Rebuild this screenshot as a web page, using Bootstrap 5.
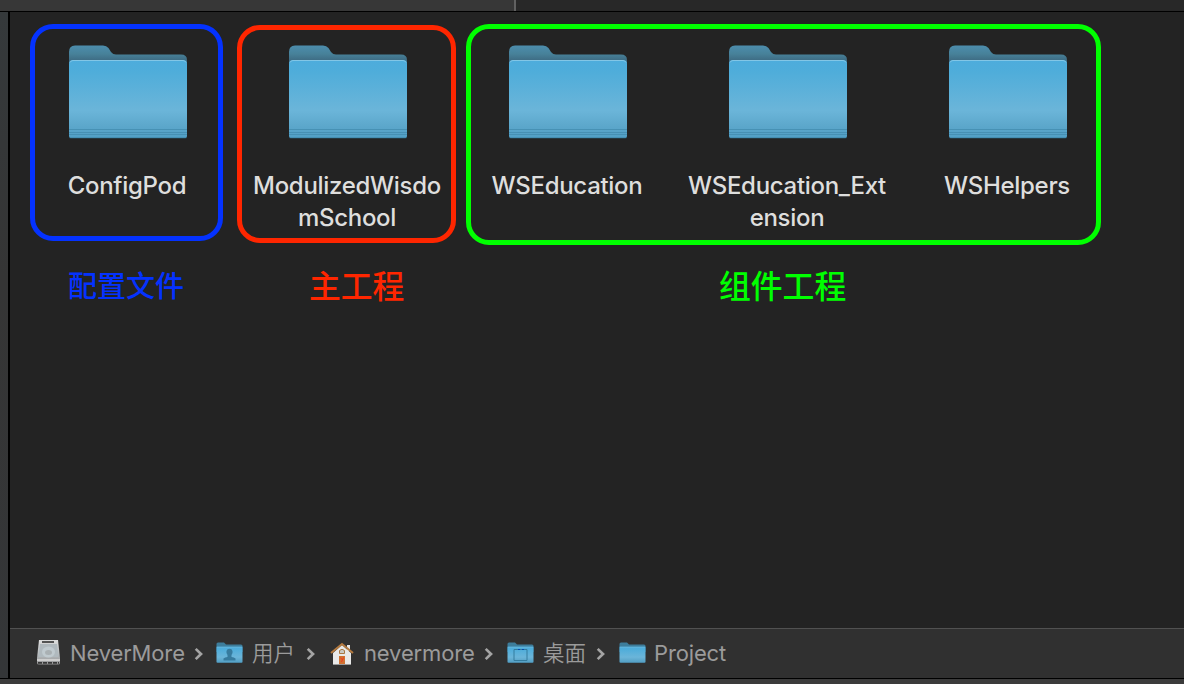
<!DOCTYPE html>
<html lang="zh-CN">
<head>
<meta charset="utf-8">
<meta name="viewport" content="width=device-width, initial-scale=1">
<title>Project</title>
<link href="https://cdn.jsdelivr.net/npm/bootstrap@5.3.0/dist/css/bootstrap.min.css" rel="stylesheet">
<style>
  body { background:#232323; color:#dededd; font-family:Inter,"Noto Sans CJK SC",sans-serif; }
  .tabs { height:12px; background:#282828; border-bottom:1px solid #000; }
  .tab-left { width:516px; background:#373737; border-right:2px solid #616161; }
  .side { width:10px; background:linear-gradient(#35393b,#353535 40%,#343638); border-right:2px solid #000; }
  .files { padding-left:8px; height:616px; }
  .file { width:220px; padding-top:32px; }
  .file svg { width:120px; height:98px; }
  .name { font-size:24px; font-weight:500; letter-spacing:-.3px; line-height:32px; margin-top:28px; margin-right:2px; white-space:nowrap; }
  .frame { position:absolute; border:5px solid; border-radius:23px; }
  .f1 { left:20px; top:12px; width:193px; height:217px; border-color:#0432ff; }
  .f2 { left:227px; top:13px; width:219px; height:218px; border-color:#ff2600; }
  .f3 { left:456px; top:12px; width:635px; height:221px; border-color:#00ff00; }
  .notes { font-family:"Noto Sans CJK SC",sans-serif; font-weight:500; line-height:44px; margin-top:28px; }
  .n1 { color:#0432ff; font-size:29px; width:220px; padding-left:50px; }
  .n2 { color:#ff2600; font-size:31.8px; width:220px; padding-left:71px; }
  .n3 { color:#00ff00; font-size:31.8px; padding-left:261px; }
  .pathbar { height:50px; background:#303030; border-top:1px solid #515151; color:#9b9b9b; font-size:22px; line-height:49px; letter-spacing:-.15px; }
  .pathbar span { white-space:nowrap; }
  .bottom { height:6px; background:#3b3b3b; border-top:1px solid #000; }
  .pathbar .cjk { font-family:"Noto Sans CJK SC",sans-serif; font-weight:350; font-size:21.5px; letter-spacing:0; padding-bottom:3px; line-height:46px; }
</style>
</head>
<body class="overflow-hidden">
<svg width="0" height="0" class="position-absolute" aria-hidden="true">
  <defs>
    <linearGradient id="front" x1="0" y1="0" x2="0" y2="1">
      <stop offset="0" stop-color="#4dacdc"/><stop offset=".15" stop-color="#4fadda"/><stop offset=".65" stop-color="#6bb5d9"/><stop offset=".85" stop-color="#5ca7cb"/><stop offset="1" stop-color="#519fc6"/>
    </linearGradient>
    <linearGradient id="back" x1="0" y1="0" x2="0" y2="1">
      <stop offset="0" stop-color="#4c8dad"/><stop offset=".3" stop-color="#478199"/><stop offset=".5" stop-color="#3f6e86"/><stop offset="1" stop-color="#3d6f89"/>
    </linearGradient>
    <linearGradient id="metal" x1="0" y1="0" x2="0" y2="1">
      <stop offset="0" stop-color="#dcdcdc"/><stop offset=".6" stop-color="#b6babd"/><stop offset="1" stop-color="#929292"/>
    </linearGradient>
    <symbol id="folder" viewBox="0 0 120 98">
      <path d="M1 8Q1 1.500 7 1.500H35Q38.500 1.500 40.500 4L43 8Q45 10.500 48 10.500H113Q119 10.500 119 16V30H1Z" fill="url(#back)"/>
      <path d="M1 20Q1 16 5 16H115Q119 16 119 20V92Q119 94 117 94H3Q1 94 1 92Z" fill="#243d49" transform="translate(0 1)" opacity=".8"/>
      <path d="M1 20Q1 16 5 16H115Q119 16 119 20V92Q119 94 117 94H3Q1 94 1 92Z" fill="url(#front)"/>
      <path d="M2 18.500Q3 16.500 5 16.500H115Q117 16.500 118 18.500" fill="none" stroke="#82c6e6"/>
      <path d="M1 85.500H119M1 88.500H119M1 90.500H119M2 93.500H118" stroke="#438bae" stroke-width=".8"/>
    </symbol>
    <symbol id="minifolder" viewBox="0 0 27 22">
      <path d="M.5 2Q.5 .5 2 .5H8L10 2.500H25Q26.500 2.500 26.500 4V10H.5Z" fill="#3d7d9b"/>
      <path d="M.5 4.800H26.500V20Q26.500 20.700 25.500 20.700H1.500Q.5 20.700 .5 20Z" fill="url(#front)"/>
      <path d="M1 5.200H26" stroke="#6dbce0" stroke-width=".7"/>
    </symbol>
    <symbol id="chev" viewBox="0 0 10 14"><path d="M1.700 1.900L7 7L1.700 12.100" fill="none" stroke="#a4a4a4" stroke-width="2.700"/></symbol>
  </defs>
</svg>

<header class="tabs"><div class="tab-left h-100"></div></header>
<div class="d-flex">
  <aside class="side flex-shrink-0"></aside>
  <div class="flex-grow-1">
    <main class="files position-relative">
      <div class="d-flex text-center">
        <div class="file"><svg><use href="#folder"/></svg><div class="name">ConfigPod</div></div>
        <div class="file"><svg><use href="#folder"/></svg><div class="name">ModulizedWisdo<br>mSchool</div></div>
        <div class="file"><svg><use href="#folder"/></svg><div class="name">WSEducation</div></div>
        <div class="file"><svg><use href="#folder"/></svg><div class="name">WSEducation_Ext<br>ension</div></div>
        <div class="file"><svg><use href="#folder"/></svg><div class="name">WSHelpers</div></div>
      </div>
      <div class="notes d-flex"><div class="n1">配置文件</div><div class="n2">主工程</div><div class="n3">组件工程</div></div>
      <div class="frame f1"></div><div class="frame f2"></div><div class="frame f3"></div>
    </main>
    <nav class="pathbar d-flex align-items-center">
      <svg width="25" height="27" viewBox="0 0 25 27" style="margin-left:26px;margin-bottom:2px">
        <path d="M3 1H22L24 19V24Q24 25.500 22 25.500H3Q1 25.500 1 24V19Z" fill="url(#metal)"/>
        <path d="M4 5H21L22.500 18H2.500Z" fill="#b0b9be"/><ellipse cx="12.500" cy="13" rx="6.500" ry="5.500" fill="#c0cacf"/><ellipse cx="12.500" cy="13.500" rx="3.500" ry="2.500" fill="#a9b0b3"/>
        <path d="M1 20H24V22H1Z" fill="#cecece"/><path d="M6 3H18" stroke="#333" stroke-width="1.600"/><path d="M2 23.800H23" stroke="#383838" stroke-width="1.800" stroke-dasharray="4 1"/>
      </svg>
      <span style="margin-left:9px;width:124px">NeverMore</span>
      <svg width="10" height="14"><use href="#chev"/></svg>
      <svg width="27" height="22" viewBox="0 0 27 22" style="margin-left:12px;margin-bottom:1px"><use href="#minifolder"/><path d="M7.500 18.500V16.500Q9 15 11.500 15V13Q10 11.500 10.500 9Q11 6.800 13.500 6.800T16.500 9Q17 11.500 15.500 13V15Q18 15 19.500 16.500V18.500Z" fill="#367b9e"/></svg>
      <span class="cjk" style="margin-left:9px;width:55px">用户</span>
      <svg width="10" height="14" style="margin-left:-1px"><use href="#chev"/></svg>
      <svg width="24" height="24" viewBox="0 0 24 24" style="margin-left:14px">
        <path d="M17 3H20V9H17Z" fill="#e5e5e5"/><path d="M3 11L12 3L21 11V22.500H3Z" fill="#e9e9e8"/><path d="M1 11L12 2L23 11" fill="none" stroke="#b3793f" stroke-width="2"/><path d="M9.500 8.500Q12 6 14.500 8.500V11.500H9.500Z" fill="#cac9c2" stroke="#a97843"/><path d="M9 14H15V22.500H9Z" fill="#d07232"/><path d="M10.500 16L13 18M13.500 15.500L11.500 20" stroke="#f03820"/><path d="M3 22.500H21" stroke="#999"/>
      </svg>
      <span style="margin-left:10px;width:120px">nevermore</span>
      <svg width="10" height="14"><use href="#chev"/></svg>
      <svg width="27" height="22" viewBox="0 0 27 22" style="margin-left:13px;margin-bottom:1px"><use href="#minifolder"/><path d="M7 7.500H20V18.500H7Z" fill="none" stroke="#347c9e"/><path d="M11 7.500H13M15 7.500H17" stroke="#064bae" stroke-width="1.200"/></svg>
      <span class="cjk" style="margin-left:9px;width:54px">桌面</span>
      <svg width="10" height="14" style="margin-left:-1px"><use href="#chev"/></svg>
      <svg width="27" height="22" style="margin-left:13px;margin-bottom:1px"><use href="#minifolder"/></svg>
      <span style="margin-left:8px">Project</span>
    </nav>
  </div>
</div>
<footer class="bottom"></footer>
<script src="https://cdn.jsdelivr.net/npm/bootstrap@5.3.0/dist/js/bootstrap.bundle.min.js"></script>
</body>
</html>
